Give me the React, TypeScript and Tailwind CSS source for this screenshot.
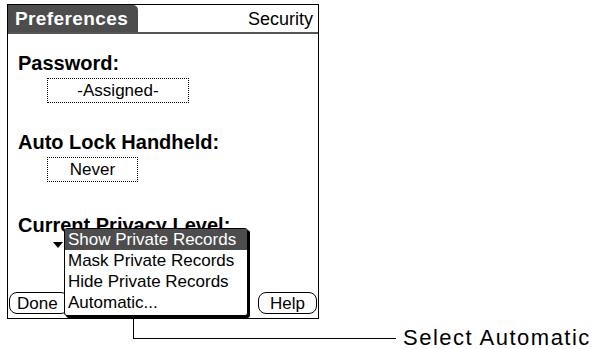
// Palm OS — Preferences / Security 화면과 설명선
const PALM = { fontFamily: '"Liberation Sans", "DejaVu Sans", sans-serif' };

const PRIVACY_OPTIONS = [
  "Show Private Records",
  "Mask Private Records",
  "Hide Private Records",
  "Automatic...",
];

function DottedField({ label, width }: { label: string; width: string }) {
  return (
    <div
      className={`ml-[29px] mt-[5px] h-[25px] flex items-center justify-center border border-dotted border-black text-[17px] leading-none text-black ${width}`}
    >
      {label}
    </div>
  );
}

export default function App() {
  return (
    <div className="w-[599px] h-[349px] bg-white overflow-hidden" style={PALM}>
      {/* 화면 프레임 */}
      <div className="relative ml-[7px] mt-[4px] w-[312px] h-[315px] border border-black flex flex-col">
        {/* 타이틀 바 */}
        <div className="flex items-stretch h-[29px] border-b-2 border-[#555]">
          <div className="w-[130px] bg-[#4d4d4d] rounded-tr-[5px] flex items-center pl-[7px]">
            <span className="text-white font-bold text-[19px] leading-none tracking-[0.4px]">Preferences</span>
          </div>
          <div className="flex-1 flex items-center justify-end pr-[5px]">
            <span className="text-black text-[18px] leading-none">Security</span>
          </div>
        </div>

        {/* 본문 */}
        <div className="flex-1 flex flex-col pl-[10px]">
          <div className="mt-[19px] text-[20px] font-bold leading-none text-black">Password:</div>
          <DottedField label="-Assigned-" width="w-[142px]" />

          <div className="mt-[29px] text-[20px] font-bold leading-none text-black">Auto Lock Handheld:</div>
          <DottedField label="Never" width="w-[91px]" />

          <div className="mt-[33px] text-[20px] font-bold leading-none text-black">Current Privacy Level:</div>
          <div className="ml-[35px] mt-[7px] w-0 h-0 border-l-[5px] border-r-[5px] border-t-[6px] border-l-transparent border-r-transparent border-t-black" />
        </div>

        {/* 하단 버튼 */}
        <div className="flex justify-between items-center px-[1px] pb-[4px]">
          <button className="h-[22px] w-[60px] pl-[7px] text-left border-[1.5px] border-black rounded-[8px] text-[17px] leading-none text-black">
            Done
          </button>
          <button className="h-[22px] w-[59px] border-[1.5px] border-black rounded-[8px] text-[17px] leading-none text-black">
            Help
          </button>
        </div>

        {/* 팝업 목록 */}
        <div className="absolute left-[56px] top-[223px] w-[184px] bg-white border border-black rounded-[3px] shadow-[2px_2px_0_0_#000] pb-[2px]">
          {PRIVACY_OPTIONS.map((opt, i) => (
            <div
              key={opt}
              className={`h-[21px] flex items-center pl-[3px] text-[17px] leading-none ${
                i === 0 ? "bg-[#4d4d4d] text-white" : "text-black"
              }`}
            >
              {opt}
            </div>
          ))}
        </div>
      </div>

      {/* 설명선 */}
      <div className="flex items-end">
        <div className="ml-[133px] h-[20px] w-[263px] border-l border-b border-black" />
        <span
          className="ml-[7px] mb-[-10px] text-[22px] leading-none tracking-[1.5px] text-black"
          style={{ fontFamily: '"Liberation Sans", Arial, sans-serif' }}
        >
          Select Automatic
        </span>
      </div>
    </div>
  );
}
